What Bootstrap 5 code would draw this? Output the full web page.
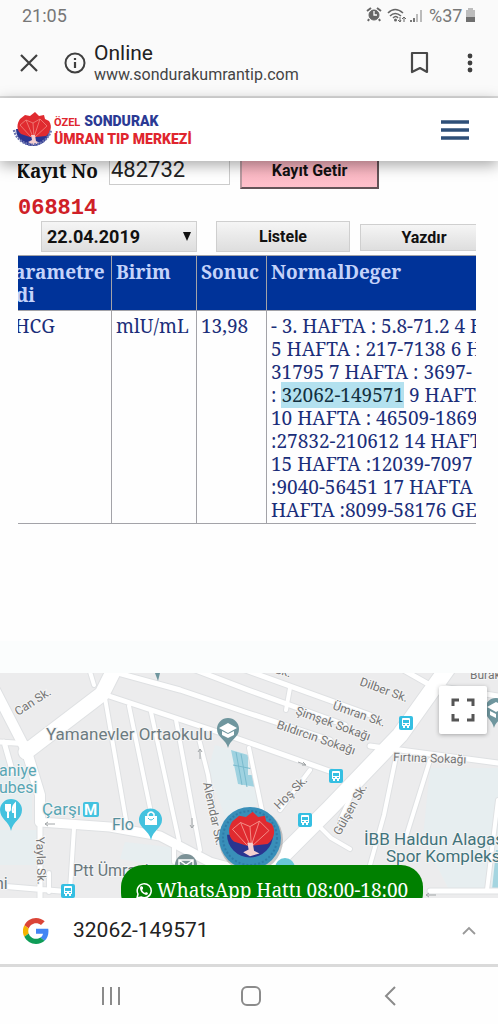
<!DOCTYPE html>
<html lang="tr">
<head>
<meta charset="utf-8">
<meta name="viewport" content="width=device-width, initial-scale=1">
<title>Online</title>
<link href="https://cdn.jsdelivr.net/npm/bootstrap@5.3.0/dist/css/bootstrap.min.css" rel="stylesheet">
<style>
body{font-family:Roboto,"Noto Sans",sans-serif;background:#fefefe;color:#222;overflow-x:hidden}
svg{display:block;flex:none}
.plain-btn{background:none;border:0;padding:0;color:inherit}
.status-bar{height:30px;padding:0 20px 0 22px;background:#fafafa;color:#777;font-size:18px}
.address-bar{height:68px;padding:0 16px 0 18px;background:#fafafa;border-bottom:2px solid #dcdcdc;color:#3f3f3f}
.page-title{font-size:21px;line-height:24px;color:#222}
.page-host{font-size:16px;line-height:20px;color:#444}
.site-header{height:63px;padding:0 29px 0 12px;background:#fff;box-shadow:0 4px 14px rgba(0,0,0,.35);z-index:2}
.brand-name{font-weight:700;line-height:17px;color:#e0262e;text-decoration:none}
.brand-top small{font-size:11px;font-weight:700}
.brand-top b{font-size:14px;font-weight:900;color:#2b3a94}
.brand-main{font-size:14px;font-weight:900}
.results{min-height:480px;margin:0 22px 0 18px;overflow:hidden}
.serif{font-family:"Noto Serif","DejaVu Serif",serif}
.lookup{margin-top:-8px}
.lookup label{font-size:19px;line-height:36px;font-weight:700;color:#111;width:91px;margin-left:-2px;white-space:nowrap;flex:none}
.lookup input{width:121px;height:32px;border:1px solid #ccc;padding:0 1px;font-size:22px;color:#222;border-radius:0;margin-left:2px}
.fetch-btn{width:139px;height:36px;margin-left:10px;border:2px outset #b89aa0;background:linear-gradient(#f3adb9,#ffc0cb);font-size:16px;font-weight:700;color:#111;border-radius:0;padding:0}
.patient-code{font-family:"Liberation Mono",monospace;font-size:22px;font-weight:700;line-height:24px;color:#cf2027;margin-top:8px}
.tool-row{height:34px;margin-left:23px;white-space:nowrap}
.grey-ctl{background:linear-gradient(#f5f5f5,#dedede);border:1px solid #cfcfcf;border-radius:0;font-size:16px;font-weight:700;color:#111;height:31px;padding:0;flex:none}
.date-wrap{width:156px;flex:none}
.date-wrap select{appearance:none;width:100%;padding-left:5px;font-size:18px}
.date-wrap svg{right:6px;top:11px;pointer-events:none}
.list-btn{width:134px;margin-left:19px}
.print-btn{width:128px;height:27px;margin:3px 0 0 10px}
.result-table{width:560px;margin:0 0 0 -21px;table-layout:fixed;font-size:19px;line-height:23px;color:#1b2e7a;border-collapse:collapse}
.result-table th,.result-table td{border:1px solid #a3a3a8;padding:4px 4px 1px;vertical-align:top}
.result-table th{background:#003399;color:#c5d3fa;height:55px;padding-top:5px}
.result-table td{white-space:nowrap}
.picked{background:#b3e1ef;color:#12303e}
.map-area{background:#ececec;overflow:hidden}
.strip{height:32px;background:#fbfdfd}
.map-svg{width:100%;height:225px}
.full-btn{width:48px;height:48px;top:13px;right:11px;background:#fff;border-radius:2px;box-shadow:0 1px 4px rgba(0,0,0,.3)}
.chat-link{left:24.3%;top:192px;width:302px;height:50px;border-radius:22px;background:#008000;color:#fff;text-decoration:none;font-size:19px;white-space:nowrap}
.search-sheet{height:69px;background:#fff;border-bottom:3px solid #dadada;padding:0 22px 0 23px;z-index:2}
.search-sheet span{font-size:21px;color:#222}
.nav-keys{height:57px;background:#fefefe;padding:0 98px 0 101px}
</style>
</head>
<body>
<svg width="0" height="0" class="position-absolute" aria-hidden="true">
<defs>
<g id="emblem">
<path fill="#2a3590" d="M3 19h34a17 17 0 0 1-34 0"/>
<path fill="#e02b30" d="M8 24C3 20 4 13 7 9L12 5l5 1 5-4 4 4 5-1 1 4 4 2c4 6 1 12-3 15L23 27H17z"/>
<path fill="none" stroke="#f7a49a" stroke-width=".6" d="M18 27L7 15l6-5 7 3 7-4 7 7-12 11M20 27l-7-17M21 27l6-18M20 13l1 14"/>
<path fill="#f3cfd0" d="M18 25h4l1 6 4 2-7 2-5-3 4-2z"/>
</g>
<g id="bus"><rect x="-7" y="-7" width="14" height="14" rx="2" fill="#35bfe2"/><path fill="#fff" d="M-4-4q0-1 1-1h6q1 0 1 1v7H3v2H1V3h-2v2h-2V3h-1z"/><path fill="#35bfe2" d="M-3-3h6v3h-6zM-3 1h2v1h-2zM1 1h2v1h-2z"/></g>
</defs>
</svg>
<div class="d-flex flex-column min-vh-100">
<div class="status-bar d-flex align-items-center">
<span class="me-auto">21:05</span>
<svg width="115" height="20" viewBox="0 0 115 20" role="img" aria-label="Alarm, Wi-Fi, sinyal, pil %37">
<g fill="none" stroke="#666"><circle cx="11" cy="10" r="5" fill="#666"/><path stroke-width="2" d="M4 6l4-3M14 3l4 3M6 14l-1 2M16 14l1 2"/><path stroke="#fff" stroke-width="1.3" d="M11 6v4h3"/>
<path stroke-width="1.6" d="M25 8q7-7 15 0M27 11q5-5 11 0M30 13q3-3 5 0"/><path d="M37 12v5m-2-2l2 2 1-2M41 17v-5m-2 2l2-2 2 2"/></g>
<circle cx="32.500" cy="15" r="1.500" fill="#666"/>
<path stroke="#777" stroke-width="2" d="M48 17v-2M51 17v-4"/><path stroke="#bbb" stroke-width="2" d="M54 17V9M58 17V5"/>
<text x="66" y="17" font-size="18" fill="#777" font-family="Roboto,sans-serif">%37</text>
<path fill="#bdbdbd" d="M103 5h2V3h5v2h2v7h-9z"/><path fill="#6f6f6f" d="M103 12h9v5h-9z"/>
</svg>
</div>
<div class="address-bar d-flex align-items-center">
<button class="plain-btn" aria-label="Kapat"><svg width="22" height="22" viewBox="0 0 22 22"><path d="M3 3l16 16M19 3L3 19" stroke="#3f3f3f" stroke-width="2.200"/></svg></button>
<button class="plain-btn ms-4" aria-label="Site bilgisi"><svg width="22" height="22" viewBox="0 0 22 22"><circle cx="11" cy="11" r="9.500" fill="none" stroke="#3f3f3f" stroke-width="2"/><path d="M11 6v2M11 10v6" stroke="#3f3f3f" stroke-width="2.200"/></svg></button>
<div class="ms-2 me-auto"><div class="page-title">Online</div><div class="page-host">www.sondurakumrantip.com</div></div>
<button class="plain-btn" aria-label="Yer işareti"><svg width="20" height="24" viewBox="0 0 20 24"><path d="M2 2h15v19l-7-4-8 4z" fill="none" stroke="#484848" stroke-width="2.200" stroke-linejoin="round"/></svg></button>
<button class="plain-btn ms-4 ps-1" aria-label="Seçenekler"><svg width="24" height="24" viewBox="0 0 24 24" fill="#3f3f3f"><circle cx="12" cy="5" r="2.400"/><circle cx="12" cy="12" r="2.400"/><circle cx="12" cy="19" r="2.400"/></svg></button>
</div>
<header class="site-header d-flex align-items-center position-relative">
<svg width="42" height="42" viewBox="0 0 42 42" aria-hidden="true"><g transform="translate(1 1)"><use href="#emblem"/><path d="M1 20a19 19 0 0 0 37 0" fill="none" stroke="#6c74b0" stroke-width="2.500" stroke-dasharray="2 1"/></g></svg>
<a class="brand-name me-auto" href="#"><div class="brand-top"><small>ÖZEL</small> <b>SONDURAK</b></div><div class="brand-main">ÜMRAN TIP MERKEZİ</div></a>
<button class="plain-btn" aria-label="Menü"><svg width="28" height="22" viewBox="0 0 28 22"><path d="M0 3h28M0 11h28M0 19h28" stroke="#2e4f77" stroke-width="3.500"/></svg></button>
</header>
<main class="flex-grow-1">
<section class="results">
<form class="lookup d-flex align-items-start" onsubmit="return false"><label class="serif" for="kayit">Kayıt No</label><input id="kayit" type="text" value="482732"><button class="fetch-btn">Kayıt Getir</button></form>
<div class="patient-code">068814</div>
<div class="tool-row d-flex align-items-start">
<div class="date-wrap position-relative"><select class="grey-ctl" aria-label="Tarih"><option>22.04.2019</option></select><svg class="position-absolute" width="8" height="9" viewBox="0 0 8 9"><path d="M0 0h8L4 9z" fill="#111"/></svg></div>
<button class="grey-ctl list-btn">Listele</button><button class="grey-ctl print-btn">Yazdır</button>
</div>
<table class="result-table serif">
<colgroup><col style="width:114px"><col style="width:85px"><col style="width:70px"><col></colgroup>
<thead><tr><th>Parametre Adi</th><th>Birim</th><th>Sonuc</th><th>NormalDeger</th></tr></thead>
<tbody><tr><td>BHCG</td><td>mlU/mL</td><td>13,98</td><td>- 3. HAFTA : 5.8-71.2 4 HAFTA<br>5 HAFTA : 217-7138 6 HAFTA<br>31795 7 HAFTA : 3697-<br>: <span class="picked">32062-149571</span> 9 HAFTA<br>10 HAFTA : 46509-1869<br>:27832-210612 14 HAFTA<br>15 HAFTA :12039-7097<br>:9040-56451 17 HAFTA<br>HAFTA :8099-58176 GEB</td></tr></tbody>
</table>
</section>
<div class="strip"></div>
<section class="map-area position-relative" aria-label="Harita">
<svg class="map-svg" viewBox="0 673 498 225" preserveAspectRatio="xMidYMid slice" font-family="Roboto,sans-serif">
<path fill="#ececed" d="M0 673h498v225H0z"/>
<path fill="#e7eef0" d="M430 768h68v120h-50l-25-50zM215 745l35 10 10 45-30 30-22-60zM0 760h32v60H0zM0 830h38v35H0zM125 842l45 5 5 22-55-10z"/>
<path fill="#9fd2e0" d="M231 750l17 5 8 32-18-3zM248 745v30h6z"/><path stroke="#79bacd" fill="none" d="M236 752l6 33M241 754l6 33M233 765l20 4"/>
<path fill="#a5d5e0" d="M496 850h2v40h-6z"/>
<g fill="none" stroke="#dfe1e3" stroke-linejoin="round" stroke-linecap="round">
<path stroke-width="17" d="M116 666L102 694 26 752"/>
<path stroke-width="12" d="M-5 690L27 752 40 795V822"/>
<path stroke-width="18" d="M452 662L400 735 330 808 262 876"/>
<path stroke-width="11" d="M40 822L110 827 160 836 210 862 262 876"/>
<path stroke-width="7" d="M100 693L230 736 335 773M118 673L180 690 248 713 330 740M185 666L248 690 345 725M240 668L370 715M400 668L430 685 498 696M40 825V900M4 742L12 770M0 742L30 744M0 886L60 891M370 746L498 763M430 891H498"/>
<path stroke-width="6" d="M105 698L127 826M129 706L155 832M151 712L179 841M176 720L200 850M198 735L208 775 214 815M249 748L264 820M74 828L70 890M49 873V892M397 752L384 815 370 865M430 760L405 840M310 770L280 810M365 765L340 820M318 825L331 838 350 849M498 800L487 890M88 665L94 685M174 843V862M290 688L286 710"/>
</g>
<g fill="none" stroke="#fff" stroke-linejoin="round" stroke-linecap="round">
<path stroke-width="15" d="M116 666L102 694 26 752"/>
<path stroke-width="10" d="M-5 690L27 752 40 795V822"/>
<path stroke-width="16" d="M452 662L400 735 330 808 262 876"/>
<path stroke-width="9" d="M40 822L110 827 160 836 210 862 262 876"/>
<path stroke-width="5" d="M100 693L230 736 335 773M118 673L180 690 248 713 330 740M185 666L248 690 345 725M240 668L370 715M400 668L430 685 498 696M40 825V900M4 742L12 770M0 742L30 744M0 886L60 891M370 746L498 763M430 891H498"/>
<path stroke-width="4" d="M105 698L127 826M129 706L155 832M151 712L179 841M176 720L200 850M198 735L208 775 214 815M249 748L264 820M74 828L70 890M49 873V892M397 752L384 815 370 865M430 760L405 840M310 770L280 810M365 765L340 820M318 825L331 838 350 849M498 800L487 890M88 665L94 685M174 843V862M290 688L286 710"/>
</g>
<g stroke="#a2a6a8" fill="none"><path d="M55 824H45l3-2m-3 2l3 2M200 759v-10l-2 3m2-3l2 3M192 818v10l-2-3m2 3l2-3M298 762l8 3-3-3m3 3h-4M436 895h-10l3-2m-3 2l3 2"/></g>
<g font-size="12" fill="#757575" stroke="#f4f4f4" stroke-width="2" paint-order="stroke">
<text transform="translate(18 716) rotate(-33)">Can Sk.</text>
<text transform="translate(359 685) rotate(20)">Dilber Sk.</text>
<text transform="translate(332 709) rotate(19)">Ümran Sk.</text>
<text transform="translate(295 714) rotate(20)">Şimşek Sokağı</text>
<text transform="translate(276 728) rotate(19)">Bıldırcın Sokağı</text>
<text transform="translate(393 761) rotate(2)">Fırtına Sokağı</text>
<text transform="translate(279 810) rotate(-45)">Hoş Sk.</text>
<text transform="translate(340 836) rotate(-61)">Gülşen Sk.</text>
<text transform="translate(203 783) rotate(78)">Alemdar Sk.</text>
<text transform="translate(36 837) rotate(88)">Yayla Sk.</text>
<text x="470" y="679">Burak</text><text transform="translate(274 673) rotate(15)">Sk.</text>
</g>
<g font-size="17" stroke="#f4f4f4" stroke-width="2" paint-order="stroke">
<text x="46" y="740" fill="#6c7b80">Yamanevler Ortaokulu</text>
<g fill="#58a6b4"><text x="-1" y="776" font-size="16">aniye</text><text x="-1" y="793" font-size="16">ubesi</text><text x="42" y="815">Çarşı</text></g>
<text x="112" y="830" fill="#568f9c" font-size="16">Flo</text>
<text x="73" y="876" fill="#68777c" font-size="16">Ptt Ümraniye</text>
<text x="-5" y="889" fill="#68777c" font-size="16">ni</text>
<text x="364" y="845" fill="#41737b">İBB Haldun Alagaş</text><text x="386" y="862" fill="#41737b">Spor Kompleksi</text>
</g>
<g fill="#6f969e"><path d="M228 748C226 739 217 738 217 729a11 11 0 0 1 22 0c0 9-9 10-11 19zM494 728c-2-9-9-10-9-19a11 11 0 0 1 22 0c0 9-11 10-13 19zM155 673h5l-2 8z"/></g>
<g fill="#fff"><path d="M219 728l9-5 9 5-9 5zM222 731l6 3 6-3v4l-6 3-6-3zM487 707l9-5 9 5-9 5zM490 711l6 3v4l-6-3z"/></g>
<g fill="#44c2df"><path d="M11 831c-2-10-11-12-11-21a11 11 0 0 1 22 0c0 9-9 11-11 21zM151 840c-2-10-12-12-12-20a11 11 0 0 1 23 0c0 8-9 10-11 20z"/><rect x="83" y="802" width="16" height="15" rx="2"/></g>
<path fill="none" stroke="#fff" stroke-width="2" d="M6 804v5q0 2 2 2v7M8 804v8M10 804v5q0 2-2 2M15 818v-14q-3 3-2 8h2"/>
<path fill="none" stroke="#fff" stroke-width="1.500" d="M148 817v-3q3-4 6 0v3"/><path fill="#fff" d="M145 816h12v9h-12z"/><path stroke="#44c2df" fill="none" d="M148 818q3 4 6 0"/>
<text x="84" y="815" fill="#fff" font-size="15" font-weight="700">M</text>
<use href="#bus" x="406" y="723"/><use href="#bus" x="336" y="776"/><use href="#bus" x="305" y="820"/><use href="#bus" x="68" y="891"/>
<circle cx="186" cy="865" r="11" fill="#7c9297"/><path d="M179 860h14v9h-14zl7 5 7-5" fill="none" stroke="#fff" stroke-width="1.500"/>
<circle cx="285" cy="868" r="10" fill="#69c7d8"/>
<circle cx="251" cy="840" r="32" fill="#777" opacity=".4"/><circle cx="250" cy="838" r="31" fill="#398fb9"/>
<circle cx="250" cy="838" r="27" fill="none" stroke="#2f7ba8" stroke-width="2" stroke-dasharray="2 2"/>
<g transform="translate(223 809) scale(1.350)"><use href="#emblem"/></g>
</svg>
<button class="plain-btn full-btn position-absolute d-flex align-items-center justify-content-center" aria-label="Tam ekran"><svg width="24" height="24" viewBox="0 0 24 24"><path d="M2 8V2h6M16 2h6v6M22 16v6h-6M8 22H2v-6" fill="none" stroke="#555" stroke-width="3"/></svg></button>
<a class="chat-link serif position-absolute d-flex align-items-center justify-content-center gap-1" href="#"><svg width="17" height="17" viewBox="0 0 17 17"><path d="M1 16l1-4a7 7 0 1 1 3 3z" fill="none" stroke="#fff" stroke-width="1.500"/><path d="M5 4l2 1v2l-1 1q1 2 3 3l1-1 2 1q0 2-2 2Q4 11 4 6q0-1 1-2" fill="#fff"/></svg>WhatsApp Hattı 08:00-18:00</a>
</section>
</main>
<div class="search-sheet d-flex align-items-center position-relative">
<svg width="26" height="26" viewBox="0 0 48 48" aria-hidden="true"><path fill="#DB4437" d="M24 9.500c3.500 0 6.700 1.200 9.200 3.600l6.900-6.900C35.900 2.400 30.500 0 24 0 14.600 0 6.500 5.400 2.600 13.200l8 6.200C12.400 13.700 17.700 9.500 24 9.500z"/><path fill="#4285F4" d="M47 24.500c0-1.600-.2-3.100-.4-4.500H24v9h12.900c-.6 3-2.300 5.500-4.800 7.200l7.700 6C44.400 38 47 32 47 24.500z"/><path fill="#F4B400" d="M10.500 28.600a14 14 0 0 1 0-9.200l-8-6.200a24 24 0 0 0 0 21.600z"/><path fill="#0F9D58" d="M24 48c6.500 0 12-2.100 15.900-5.800l-7.700-6c-2.200 1.500-4.900 2.300-8.200 2.300-6.300 0-11.600-4.200-13.500-9.900l-8 6.200C6.500 42.600 14.600 48 24 48z"/></svg>
<span class="ms-4 me-auto">32062-149571</span>
<button class="plain-btn" aria-label="Genişlet"><svg width="14" height="10" viewBox="0 0 14 10"><path d="M1 8l6-6 6 6" fill="none" stroke="#999" stroke-width="1.800"/></svg></button>
</div>
<nav class="nav-keys d-flex align-items-center justify-content-between" aria-label="Sistem">
<button class="plain-btn" aria-label="Son uygulamalar"><svg width="20" height="20" viewBox="0 0 20 20"><path d="M2 1v18M10 1v18M18 1v18" stroke="#8b8b8b" stroke-width="2"/></svg></button>
<button class="plain-btn" aria-label="Ana ekran"><svg width="20" height="20" viewBox="0 0 20 20"><rect x="1" y="1" width="18" height="18" rx="5" fill="none" stroke="#8b8b8b" stroke-width="2"/></svg></button>
<button class="plain-btn" aria-label="Geri"><svg width="20" height="20" viewBox="0 0 20 20"><path d="M15 1L6 10l9 9" fill="none" stroke="#8b8b8b" stroke-width="2"/></svg></button>
</nav>
</div>
<script src="https://cdn.jsdelivr.net/npm/bootstrap@5.3.0/dist/js/bootstrap.bundle.min.js"></script>
</body>
</html>
